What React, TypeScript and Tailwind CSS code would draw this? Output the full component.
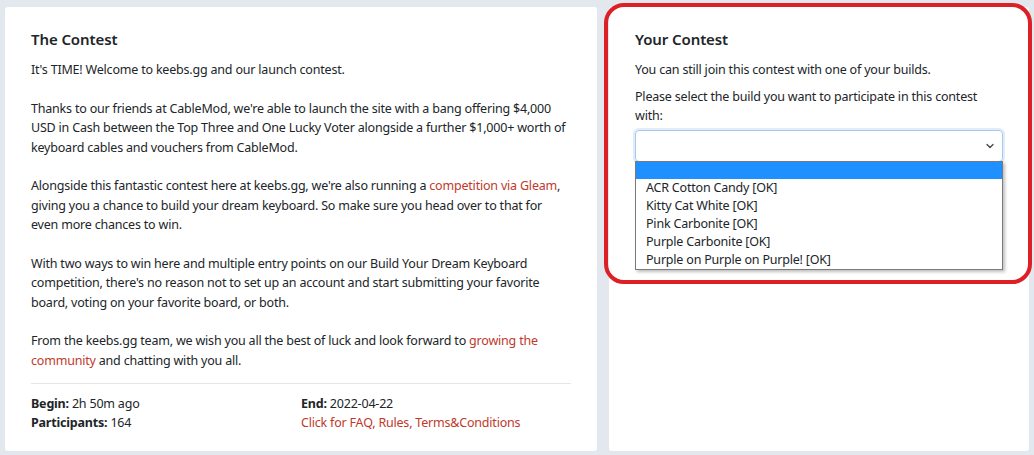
import { ChevronDown } from "lucide-react";

const builds = [
  "ACR Cotton Candy [OK]",
  "Kitty Cat White [OK]",
  "Pink Carbonite [OK]",
  "Purple Carbonite [OK]",
  "Purple on Purple on Purple! [OK]",
];

function ContestInfo() {
  return (
    <div className="bg-white rounded-[3px] pl-[26px] pr-[26px] pt-[21px] pb-4">
      <h2 className="text-[15px] font-semibold text-[#212529] leading-[22px] mb-[10px] tracking-[-0.1px]">The Contest</h2>
      <div className="text-[12.5px] leading-[19.5px] tracking-[-0.2px] text-[#212529] space-y-[19px]">
        <p>It's TIME! Welcome to keebs.gg and our launch contest.</p>
        <p>
          Thanks to our friends at CableMod, we're able to launch the site with a bang offering $4,000 USD in Cash
          between the Top Three and One Lucky Voter alongside a further $1,000+ worth of keyboard cables and vouchers
          from CableMod.
        </p>
        <p>
          Alongside this fantastic contest here at keebs.gg, we're also running a{" "}
          <a className="text-[#c0392b]">competition via Gleam</a>, giving you a chance to build your dream keyboard.
          So make sure you head over to that for even more chances to win.
        </p>
        <p>
          With two ways to win here and multiple entry points on our Build Your Dream Keyboard competition, there's no
          reason not to set up an account and start submitting your favorite board, voting on your favorite board, or
          both.
        </p>
        <p>
          From the keebs.gg team, we wish you all the best of luck and look forward to{" "}
          <a className="text-[#c0392b]">growing the community</a> and chatting with you all.
        </p>
      </div>
      <hr className="border-0 border-t border-[#e3e7ec] mt-[13px] mb-[11px]" />
      <div className="grid grid-cols-2 text-[12.5px] leading-[18.5px] tracking-[-0.2px] text-[#212529]">
        <div>
          <div>
            <span className="font-bold">Begin:</span> 2h 50m ago
          </div>
          <div>
            <span className="font-bold">Participants:</span> 164
          </div>
        </div>
        <div>
          <div>
            <span className="font-bold">End:</span> 2022-04-22
          </div>
          <a className="text-[#c0392b]">Click for FAQ, Rules, Terms&amp;Conditions</a>
        </div>
      </div>
    </div>
  );
}

function YourContest() {
  return (
    <div className="relative bg-white rounded-[3px] pl-[26px] pr-[26px] pt-[21px]">
      <h2 className="text-[15px] font-semibold text-[#212529] leading-[22px] mb-[10px] tracking-[-0.1px]">Your Contest</h2>
      <p className="text-[12.5px] leading-[19.5px] tracking-[-0.2px] text-[#212529] mb-[7px]">
        You can still join this contest with one of your builds.
      </p>
      <p className="text-[12.5px] leading-[19.5px] tracking-[-0.2px] text-[#212529] mb-[4px] pr-[20px]">
        Please select the build you want to participate in this contest with:
      </p>
      <div className="relative">
        <div className="h-[32px] rounded-[4px] border border-[#a8c8ee] shadow-[0_0_0_2px_rgba(170,200,240,0.35)] flex items-center justify-end pr-[6px]">
          <ChevronDown className="w-3 h-3 text-[#444]" strokeWidth={2.5} />
        </div>
        <ul className="absolute left-0 right-0 top-[31px] bg-white border border-[#7a7a7a] shadow-[2px_2px_3px_rgba(0,0,0,0.25)] text-[12.5px] leading-[18px] tracking-[-0.2px] text-[#212529] z-10">
          <li className="h-[17px] bg-[#1e90ff]" />
          {builds.map((b) => (
            <li key={b} className="pl-[10px]">
              {b}
            </li>
          ))}
        </ul>
      </div>
      {/* annotation outline */}
      <div className="absolute left-[-5px] top-[-4px] w-[428px] h-[281px] border-4 border-[#dd1f26] rounded-[20px] pointer-events-none" />
    </div>
  );
}

export default function App() {
  return (
    <div
      className="w-[1034px] h-[455px] bg-[#e3e8ef] pl-[5px] pr-[5px] pt-[7px] pb-[4px] grid grid-cols-[592px_420px] gap-[12px] overflow-hidden"
      style={{ fontFamily: '"Noto Sans", "Open Sans", sans-serif' }}
    >
      <ContestInfo />
      <YourContest />
    </div>
  );
}
